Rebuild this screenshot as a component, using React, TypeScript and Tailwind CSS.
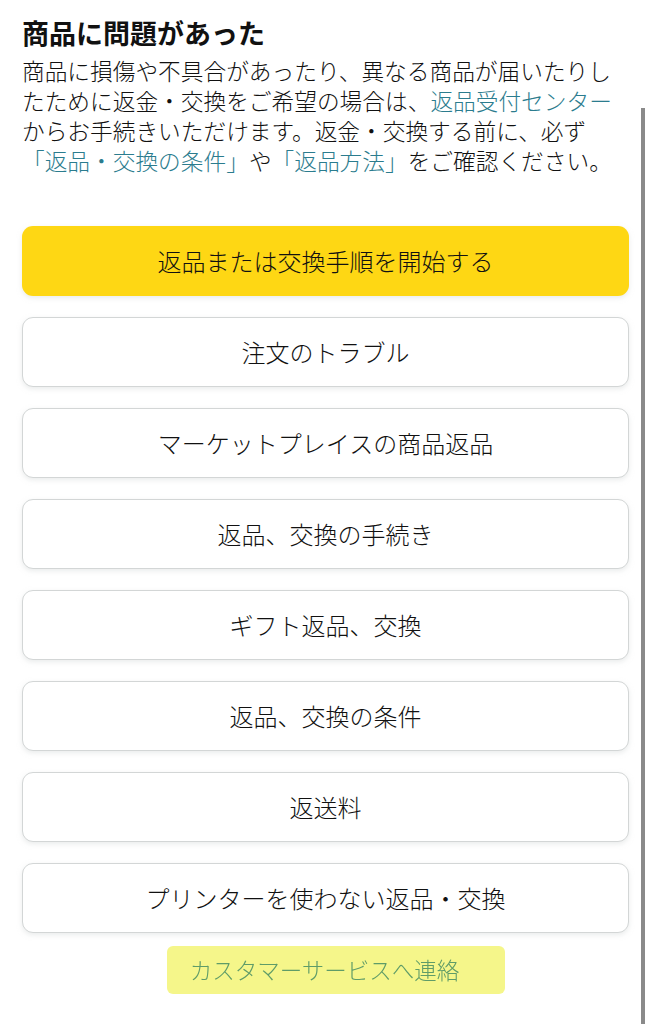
import React from "react";

// ─── Data ───────────────────────────────────────────────────────────────────

const OPTIONS: string[] = [
  "注文のトラブル",
  "マーケットプレイスの商品返品",
  "返品、交換の手続き",
  "ギフト返品、交換",
  "返品、交換の条件",
  "返送料",
  "プリンターを使わない返品・交換",
];

const FONT = { fontFamily: '"Noto Sans CJK JP", "Noto Sans", sans-serif' };

// ─── Pieces ─────────────────────────────────────────────────────────────────

const Link: React.FC<{ children: React.ReactNode }> = ({ children }) => (
  <a className="text-[#2b7c8e]">{children}</a>
);

const OptionButton: React.FC<{ label: string; primary?: boolean }> = ({ label, primary }) => (
  <button
    className={
      primary
        ? "h-[70px] w-full rounded-[11px] bg-[#fed714] text-[24px] font-light text-[#111] shadow-[0_2px_5px_rgba(213,217,217,0.5)]"
        : "h-[70px] w-full rounded-[11px] border border-[#d3d6d6] bg-white text-[24px] font-light text-[#111] shadow-[0_2px_5px_rgba(213,217,217,0.5)]"
    }
  >
    {label}
  </button>
);

// ─── App ────────────────────────────────────────────────────────────────────

export default function App() {
  return (
    <div className="relative min-h-[1024px] w-[651px] overflow-hidden bg-white" style={FONT}>
      <div className="px-[22px] pt-[14px]">
        <h1 className="text-[27px] font-bold leading-[38px] text-[#111]">商品に問題があった</h1>
        <p className="mt-[4px] pr-[6px] text-[22.7px] font-light leading-[30px] text-[#111]">
          商品に損傷や不具合があったり、異なる商品が届いたりしたために返金・交換をご希望の場合は、
          <Link>返品受付センター</Link>
          からお手続きいただけます。返金・交換する前に、必ず
          <Link>「返品・交換の条件」</Link>や<Link>「返品方法」</Link>をご確認ください。
        </p>

        <div className="mt-[50px] flex flex-col gap-[21px]">
          <OptionButton label="返品または交換手順を開始する" primary />
          {OPTIONS.map((o) => (
            <OptionButton key={o} label={o} />
          ))}
        </div>

        {/* Highlighted contact link */}
        <div className="mt-[13px] flex justify-center">
          <span className="ml-[20px] flex h-[48px] w-[338px] items-center justify-center rounded-[6px] bg-[#f5f68a] text-[22.5px] font-light text-[#5f9c68] blur-[0.4px]">
            <span className="mr-[22px]">カスタマーサービスへ連絡</span>
          </span>
        </div>
      </div>

      {/* Scrollbar */}
      <div className="absolute right-[6px] top-[108px] h-[920px] w-[4px] bg-[#8a8a8a]" />
    </div>
  );
}
